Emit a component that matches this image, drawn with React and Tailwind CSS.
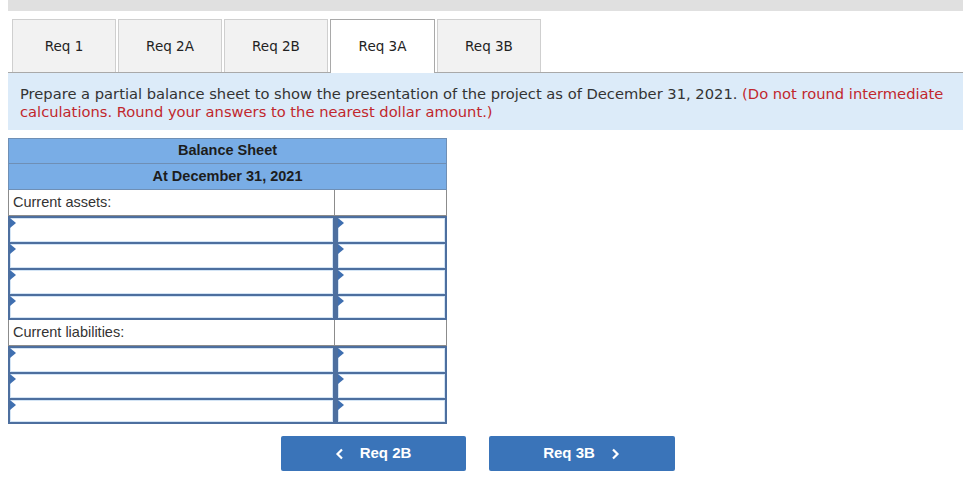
import React from 'react';

const TABS = ['Req 1', 'Req 2A', 'Req 2B', 'Req 3A', 'Req 3B'];

const Marker = () => (
  <span className="absolute left-0 top-0 w-0 h-0 border-t-[5px] border-b-[5px] border-l-[6px] border-t-transparent border-b-transparent border-l-[#3f6fb0]" />
);

const TextRow = ({ label }) => (
  <div className="grid grid-cols-[327px_112px] h-[26px]">
    <div className="border border-[#8c8c8c] border-t-0 px-[4px] flex items-center text-[14.5px] text-[#333]">{label}</div>
    <div className="border border-[#8c8c8c] border-t-0 border-l-0" />
  </div>
);

const InputRow = ({ last }) => (
  <div className="grid grid-cols-[327px_112px] h-[26px]">
    <div className={last ? 'relative border-2 border-[#4d6f9f] bg-white' : 'relative border-2 border-b-0 border-[#4d6f9f] bg-white'}>
      <div className="absolute inset-0 border border-[#d3e4f5]" />
      <Marker />
    </div>
    <div className={last ? 'relative border-2 border-l-[3px] border-[#4d6f9f] bg-white' : 'relative border-2 border-b-0 border-l-[3px] border-[#4d6f9f] bg-white'}>
      <div className="absolute inset-0 border border-[#d3e4f5]" />
      <Marker />
    </div>
  </div>
);

const App = () => {
  return (
    <div className="w-[963px] h-[501px] bg-white pl-[8px] font-['Liberation_Sans',Arial,sans-serif]">
      <div className="h-[11px] bg-[#e0e0e0]" />

      <div className="mt-[8px] flex items-end border-b border-[#a9a9a9] h-[54px] pl-[4px] gap-[2px] font-['DejaVu_Sans',Verdana,sans-serif] text-[13.5px] text-[#222]">
        {TABS.map((t, i) =>
          i === 3 ? (
            <div key={t} className="w-[105px] h-[54px] -mb-px bg-white border border-b-0 border-[#a9a9a9] flex items-center justify-center">
              {t}
            </div>
          ) : (
            <div key={t} className="w-[104px] h-[53px] bg-[#f2f2f2] border border-b-0 border-[#cfcfcf] flex items-center justify-center">
              {t}
            </div>
          )
        )}
      </div>

      <div className="bg-[#dcebf9] h-[57px] pl-[12px] pt-[12px] font-['DejaVu_Sans',Verdana,sans-serif] text-[14.7px] leading-[18px] text-[#333]">
        Prepare a partial balance sheet to show the presentation of the project as of December 31, 2021.{' '}
        <span className="text-[#c1272d]">(Do not round intermediate calculations. Round your answers to the nearest dollar amount.)</span>
      </div>

      <div className="mt-[8px] w-[439px]">
        <div className="h-[26px] bg-[#79ade6] border border-[#6f8fb5] flex items-center justify-center text-[14.5px] font-bold text-[#1d1d1d]">
          Balance Sheet
        </div>
        <div className="h-[26px] bg-[#79ade6] border border-t-0 border-[#6f8fb5] flex items-center justify-center text-[14.5px] font-bold text-[#1d1d1d]">
          At December 31, 2021
        </div>
        <TextRow label="Current assets:" />
        <InputRow />
        <InputRow />
        <InputRow />
        <InputRow last />
        <TextRow label="Current liabilities:" />
        <InputRow />
        <InputRow />
        <InputRow last />
      </div>

      <div className="mt-[12px] flex justify-center gap-[23px] pr-[16px]">
        <button className="w-[185px] h-[35px] rounded-[2px] bg-[#3a74b9] text-white text-[15px] font-bold flex items-center justify-center gap-[16px]">
          <svg width="9" height="12" viewBox="0 0 9 12"><path d="M7 1.5 L2.5 6 L7 10.5" fill="none" stroke="white" strokeWidth="2.2" /></svg>
          <span>Req 2B</span>
        </button>
        <button className="w-[186px] h-[35px] rounded-[2px] bg-[#3a74b9] text-white text-[15px] font-bold flex items-center justify-center gap-[16px]">
          <span>Req 3B</span>
          <svg width="9" height="12" viewBox="0 0 9 12"><path d="M2 1.5 L6.5 6 L2 10.5" fill="none" stroke="white" strokeWidth="2.2" /></svg>
        </button>
      </div>
    </div>
  );
};

export default App;
